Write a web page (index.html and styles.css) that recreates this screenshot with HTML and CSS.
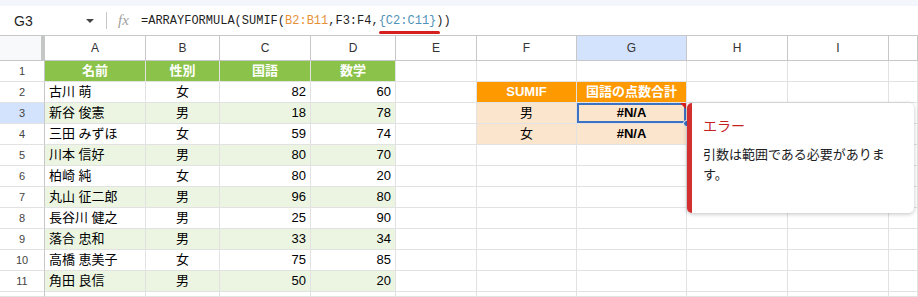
FILE: index.html
```html
<!DOCTYPE html>
<html>
<head>
    <title>SUMIF エラー</title>
    <link rel="stylesheet" href="styles.css">
</head>
<body>
    <div class="topbar"></div>
    <div class="formula-bar">
        <div class="name-box">
            <span class="cell-ref">G3</span>
            <span class="caret"></span>
        </div>
        <div class="divider"></div>
        <span class="fx">fx</span>
        <div class="formula">=ARRAYFORMULA(SUMIF(<span class="ref-orange">B2:B11</span>,F3:F4,<span class="bad-range"><span class="ref-blue">{C2:C11}</span></span>))</div>
    </div>

    <div class="sheet">
        <!-- column headers -->
        <div class="corner"></div>
        <div class="ch">A</div>
        <div class="ch">B</div>
        <div class="ch">C</div>
        <div class="ch">D</div>
        <div class="ch">E</div>
        <div class="ch">F</div>
        <div class="ch active">G</div>
        <div class="ch">H</div>
        <div class="ch">I</div>
        <div class="ch"></div>

        <!-- row 1 -->
        <div class="rh">1</div>
        <div class="c green ctr">名前</div>
        <div class="c green ctr">性別</div>
        <div class="c green ctr">国語</div>
        <div class="c green ctr">数学</div>
        <div class="c"></div>
        <div class="c"></div>
        <div class="c"></div>
        <div class="c"></div>
        <div class="c"></div>
        <div class="c"></div>

        <!-- row 2 -->
        <div class="rh">2</div>
        <div class="c">古川 萌</div>
        <div class="c ctr">女</div>
        <div class="c num">82</div>
        <div class="c num">60</div>
        <div class="c"></div>
        <div class="c orange ctr">SUMIF</div>
        <div class="c orange ctr">国語の点数合計</div>
        <div class="c"></div>
        <div class="c"></div>
        <div class="c"></div>

        <!-- row 3 -->
        <div class="rh active">3</div>
        <div class="c alt">新谷 俊憲</div>
        <div class="c alt ctr">男</div>
        <div class="c alt num">18</div>
        <div class="c alt num">78</div>
        <div class="c"></div>
        <div class="c peach ctr">男</div>
        <div class="c peach ctr bold selected">#N/A</div>
        <div class="c"></div>
        <div class="c"></div>
        <div class="c"></div>

        <!-- row 4 -->
        <div class="rh">4</div>
        <div class="c">三田 みずほ</div>
        <div class="c ctr">女</div>
        <div class="c num">59</div>
        <div class="c num">74</div>
        <div class="c"></div>
        <div class="c peach ctr">女</div>
        <div class="c peach ctr bold">#N/A</div>
        <div class="c"></div>
        <div class="c"></div>
        <div class="c"></div>

        <!-- row 5 -->
        <div class="rh">5</div>
        <div class="c alt">川本 信好</div>
        <div class="c alt ctr">男</div>
        <div class="c alt num">80</div>
        <div class="c alt num">70</div>
        <div class="c"></div><div class="c"></div><div class="c"></div><div class="c"></div><div class="c"></div><div class="c"></div>

        <!-- row 6 -->
        <div class="rh">6</div>
        <div class="c">柏崎 純</div>
        <div class="c ctr">女</div>
        <div class="c num">80</div>
        <div class="c num">20</div>
        <div class="c"></div><div class="c"></div><div class="c"></div><div class="c"></div><div class="c"></div><div class="c"></div>

        <!-- row 7 -->
        <div class="rh">7</div>
        <div class="c alt">丸山 征二郎</div>
        <div class="c alt ctr">男</div>
        <div class="c alt num">96</div>
        <div class="c alt num">80</div>
        <div class="c"></div><div class="c"></div><div class="c"></div><div class="c"></div><div class="c"></div><div class="c"></div>

        <!-- row 8 -->
        <div class="rh">8</div>
        <div class="c">長谷川 健之</div>
        <div class="c ctr">男</div>
        <div class="c num">25</div>
        <div class="c num">90</div>
        <div class="c"></div><div class="c"></div><div class="c"></div><div class="c"></div><div class="c"></div><div class="c"></div>

        <!-- row 9 -->
        <div class="rh">9</div>
        <div class="c alt">落合 忠和</div>
        <div class="c alt ctr">男</div>
        <div class="c alt num">33</div>
        <div class="c alt num">34</div>
        <div class="c"></div><div class="c"></div><div class="c"></div><div class="c"></div><div class="c"></div><div class="c"></div>

        <!-- row 10 -->
        <div class="rh">10</div>
        <div class="c">高橋 恵美子</div>
        <div class="c ctr">女</div>
        <div class="c num">75</div>
        <div class="c num">85</div>
        <div class="c"></div><div class="c"></div><div class="c"></div><div class="c"></div><div class="c"></div><div class="c"></div>

        <!-- row 11 -->
        <div class="rh">11</div>
        <div class="c alt">角田 良信</div>
        <div class="c alt ctr">男</div>
        <div class="c alt num">50</div>
        <div class="c alt num">20</div>
        <div class="c"></div><div class="c"></div><div class="c"></div><div class="c"></div><div class="c"></div><div class="c"></div>

        <!-- row 12, cut off by the window -->
        <div class="rh"></div>
        <div class="c"></div><div class="c"></div><div class="c"></div><div class="c"></div><div class="c"></div>
        <div class="c"></div><div class="c"></div><div class="c"></div><div class="c"></div><div class="c"></div>

        <div class="error-popup">
            <div class="error-title">エラー</div>
            <div class="error-text">引数は範囲である必要があります。</div>
        </div>
    </div>
</body>
</html>
```

FILE: styles.css
```css
body {
    margin: 0;
    padding: 0;
    width: 918px;
    height: 297px;
    overflow: hidden;
    background: #fff;
    font-family: "Liberation Sans", Arial, "Noto Sans CJK JP", sans-serif;
    color: #000;
}

.topbar {
    height: 6px;
    background: #f3f6fb;
}

.formula-bar {
    height: 29px;
    display: flex;
    align-items: center;
    background: #fff;
}

.name-box {
    width: 96px;
    display: flex;
    align-items: center;
    justify-content: space-between;
    padding-left: 14px;
    box-sizing: border-box;
}

.cell-ref {
    font-size: 14px;
    color: #1f1f1f;
}

.caret {
    width: 0;
    height: 0;
    border-left: 4px solid transparent;
    border-right: 4px solid transparent;
    border-top: 4px solid #444;
    margin-right: 2px;
}

.divider {
    width: 1px;
    height: 17px;
    background: #c7c7c7;
    margin-left: 10px;
}

.fx {
    font-family: "Liberation Serif", serif;
    font-style: italic;
    font-size: 15px;
    color: #a0a0a0;
    margin-left: 11px;
    width: 23px;
}

.formula {
    font-family: "Liberation Mono", monospace;
    font-size: 12px;
    color: #1f1f1f;
}

.ref-orange {
    color: #e69138;
}

.ref-blue {
    color: #4f93b8;
}

.bad-range {
    position: relative;
}

.bad-range::after {
    content: "";
    position: absolute;
    left: 0;
    right: -4px;
    bottom: -6px;
    height: 3px;
    border-radius: 2px;
    background: #d6201f;
}

/* sheet grid */
.sheet {
    position: relative;
    display: grid;
    grid-template-columns: 45px 101px 74px 91px 85px 81px 100px 110px 101px 101px 29px;
    grid-template-rows: 25px repeat(11, 21px) 5px;
    font-size: 13px;
    border-top: 1px solid #c7c7c7;
}

.corner {
    background: #f8f9fa;
    border-right: 4px solid #c4c7c5;
    border-bottom: 1px solid #c4c7c5;
    box-sizing: border-box;
}

.ch {
    display: flex;
    align-items: center;
    justify-content: center;
    font-size: 12px;
    color: #333;
    background: #fff;
    border-right: 1px solid #c7c7c7;
    border-bottom: 1px solid #c7c7c7;
    box-sizing: border-box;
}

.ch.active {
    background: #d3e3fd;
}

.rh {
    display: flex;
    align-items: center;
    justify-content: center;
    font-size: 11px;
    color: #444;
    background: #fff;
    border-right: 1px solid #c7c7c7;
    border-bottom: 1px solid #e2e2e2;
    box-sizing: border-box;
}

.rh.active {
    background: #d3e3fd;
}

.c {
    padding: 0 4px;
    line-height: 20px;
    white-space: nowrap;
    overflow: hidden;
    border-right: 1px solid #e2e2e2;
    border-bottom: 1px solid #e2e2e2;
    box-sizing: border-box;
}

.ctr {
    text-align: center;
}

.num {
    text-align: right;
}

.bold {
    font-weight: bold;
}

.green {
    background: #8bc34a;
    color: #fff;
    font-weight: bold;
}

.alt {
    background: #ebf5e2;
}

.orange {
    background: #ff9900;
    color: #fff;
    font-weight: bold;
}

.peach {
    background: #fce5cd;
}

.selected {
    position: relative;
    overflow: visible;
    box-shadow: inset 0 0 0 2px #3d71c2;
}

.selected::before {
    content: "";
    position: absolute;
    top: 0;
    right: 0;
    border-top: 6px solid #d6201f;
    border-left: 6px solid transparent;
}

.selected::after {
    content: "";
    position: absolute;
    right: -4px;
    bottom: -4px;
    width: 7px;
    height: 7px;
    border-radius: 50%;
    background: #3d71c2;
    border: 1px solid #fff;
    box-sizing: border-box;
}

.error-popup {
    position: absolute;
    left: 687px;
    top: 67px;
    width: 227px;
    height: 110px;
    background: #fff;
    border-left: 5px solid #d32f2f;
    border-radius: 5px;
    box-shadow: 0 1px 4px rgba(0, 0, 0, 0.25);
    box-sizing: border-box;
    padding: 14px 16px 0 11px;
    z-index: 5;
}

.error-title {
    font-size: 14px;
    color: #c5221f;
    line-height: 18px;
}

.error-text {
    margin-top: 10px;
    font-size: 13px;
    line-height: 20px;
    color: #202124;
}
```
